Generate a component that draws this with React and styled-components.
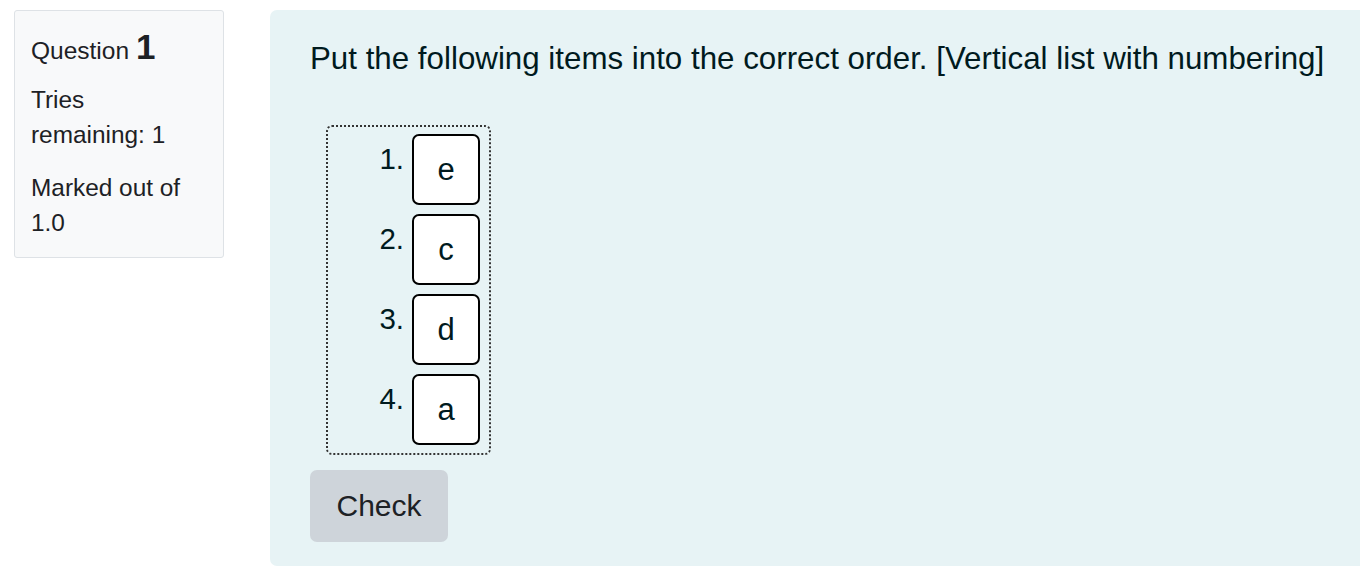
import React from 'react';
import styled, { createGlobalStyle } from 'styled-components';

const GlobalStyle = createGlobalStyle`
  body {
    margin: 0;
    background: #fff;
    font-family: 'Liberation Sans', Arial, sans-serif;
    overflow: hidden;
  }
`;

const Page = styled.div`
  display: flex;
  align-items: flex-start;
  gap: 46px;
  padding: 10px 0 0 14px;
`;

const Info = styled.div`
  flex: none;
  width: 210px;
  box-sizing: border-box;
  padding: 18px 16px 17px 16px;
  background: #f8f9fa;
  border: 1px solid #dee2e6;
  border-radius: 3px;
  color: #1d2125;
`;

const QuestionNo = styled.h3`
  margin: 0 0 11px;
  font-weight: normal;
  font-size: 24.5px;
  line-height: 40px;

  strong {
    font-size: 35px;
    line-height: 1;
    font-weight: bold;
  }
`;

const InfoLine = styled.p`
  margin: 0 0 18px;
  font-size: 24.4px;
  line-height: 35px;

  &:last-child {
    margin-bottom: 0;
  }
`;

const Content = styled.div`
  flex: 1;
  box-sizing: border-box;
  padding: 26px 16px 24px 40px;
  background: #e7f3f5;
  border-radius: 7px 0 0 7px;
  color: #001a1e;
`;

const QText = styled.div`
  font-size: 31.3px;
  line-height: 46px;
  margin-bottom: 43px;
`;

const OrderList = styled.ol`
  display: inline-flex;
  flex-direction: column;
  gap: 9px;
  margin: 0 0 0 16px;
  padding: 7px 9px 8px 0;
  list-style: none;
  border: 2px dotted #333;
  border-radius: 6px;
`;

const Row = styled.li`
  display: flex;
  align-items: flex-start;
`;

const Num = styled.span`
  width: 76px;
  margin-right: 8px;
  padding-top: 2px;
  text-align: right;
  font-size: 29.5px;
  line-height: 46px;
`;

const Item = styled.div`
  width: 68px;
  height: 71px;
  box-sizing: border-box;
  display: flex;
  align-items: center;
  justify-content: center;
  background: #fff;
  border: 2px solid #000;
  border-radius: 7px;
  font-size: 31px;
`;

const CheckButton = styled.button`
  display: block;
  margin-top: 15px;
  width: 138px;
  height: 72px;
  border: none;
  border-radius: 7px;
  background: #ced4da;
  color: #1d2125;
  font-family: inherit;
  font-size: 30px;
`;

const items = ['e', 'c', 'd', 'a'];

export default function App() {
  return (
    <>
      <GlobalStyle />
      <Page>
        <Info>
          <QuestionNo>
            Question <strong>1</strong>
          </QuestionNo>
          <InfoLine>Tries remaining:&nbsp;1</InfoLine>
          <InfoLine>Marked out of 1.0</InfoLine>
        </Info>
        <Content>
          <QText>
            Put the following items into the correct order. [Vertical list with numbering]
          </QText>
          <OrderList>
            {items.map((it, i) => (
              <Row key={it}>
                <Num>{i + 1}.</Num>
                <Item>{it}</Item>
              </Row>
            ))}
          </OrderList>
          <CheckButton>Check</CheckButton>
        </Content>
      </Page>
    </>
  );
}
